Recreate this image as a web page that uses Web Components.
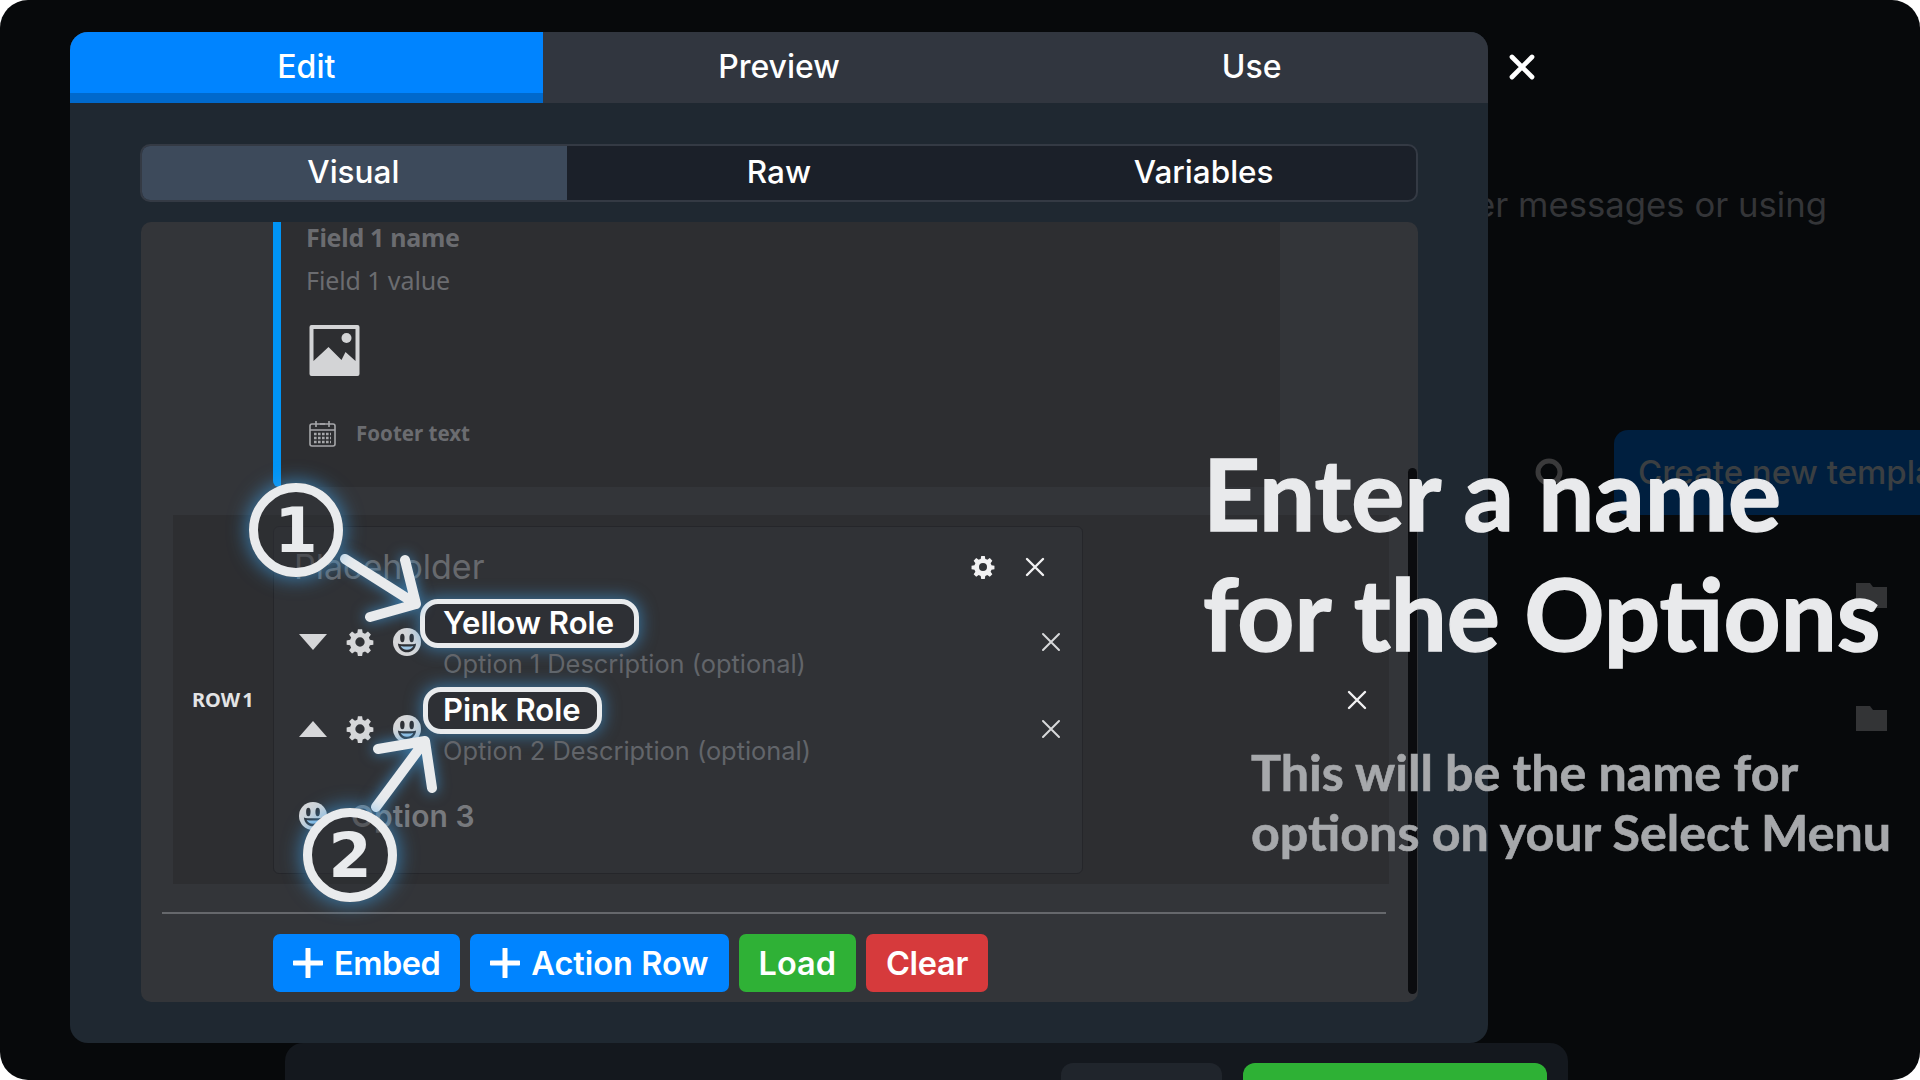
<!DOCTYPE html>
<html lang="en">
<head>
<meta charset="utf-8">
<title>Select menu tutorial</title>
<style>
  html, body { margin: 0; padding: 0; background: #fff; }
  body { width: 1920px; height: 1080px; overflow: hidden; font-family: Inter, "Liberation Sans", sans-serif; }
</style>
</head>
<body>
<tutorial-stage>
  <back-page></back-page>
  <edit-modal>
    <seg-tabs kind="top" items="Edit,Preview,Use" slot="top"></seg-tabs>
    <seg-tabs kind="sub" items="Visual,Raw,Variables" slot="sub"></seg-tabs>
    <embed-preview></embed-preview>
    <action-row>
      <option-item kind="open" name="Yellow Role" desc="Option 1 Description (optional)"></option-item>
      <option-item kind="up" name="Pink Role" desc="Option 2 Description (optional)"></option-item>
      <option-item kind="add" name="Option 3"></option-item>
    </action-row>
    <tool-bar>
      <tool-btn color="#0084ff" spacing="-.5" plus>Embed</tool-btn>
      <tool-btn color="#0084ff" spacing="0" plus>Action Row</tool-btn>
      <tool-btn color="#2fb136" spacing="0">Load</tool-btn>
      <tool-btn color="#d63a3c" spacing="-.3">Clear</tool-btn>
    </tool-bar>
  </edit-modal>
  <close-x></close-x>
  <step-arrows></step-arrows>
  <step-badge n="1" x="296" y="530"></step-badge>
  <step-badge n="2" x="350" y="855"></step-badge>
  <tip-text></tip-text>
</tutorial-stage>

<script>
const CROSS = '<path d="M4 4 20 20M20 4 4 20" fill="none" stroke="currentColor" stroke-linecap="round"/>';
const GEAR = '<path fill="currentColor" fill-rule="evenodd" d="M10.2 1h3.6l.5 3a8 8 0 0 1 2 .85l2.5-1.75 2.55 2.55-1.75 2.5a8 8 0 0 1 .85 2l3 .5v3.6l-3 .5a8 8 0 0 1-.85 2l1.75 2.5-2.55 2.55-2.5-1.75a8 8 0 0 1-2 .85l-.5 3h-3.6l-.5-3a8 8 0 0 1-2-.85l-2.5 1.75-2.55-2.55 1.75-2.5a8 8 0 0 1-.85-2l-3-.5v-3.6l3-.5a8 8 0 0 1 .85-2L2.65 5.65 5.2 3.1l2.5 1.75a8 8 0 0 1 2-.85zM12 8a4 4 0 1 0 0 8 4 4 0 0 0 0-8z"/>';
const SMILE = '<circle cx="12" cy="12" r="12" fill="#d6d7d9"/><ellipse cx="8" cy="8.6" rx="1.9" ry="3.6" fill="#2e3035"/><ellipse cx="16" cy="8.6" rx="1.9" ry="3.6" fill="#2e3035"/><path d="M4.2 13.2c2.4 1.1 13.2 1.1 15.6 0-.4 5-3.8 7.6-7.8 7.6s-7.4-2.6-7.8-7.6z" fill="#2e3035"/><path d="M6.6 15.4c2.6.6 8.2.6 10.8 0-.8 2-2.8 3.2-5.4 3.2s-4.6-1.2-5.4-3.2z" fill="#9fc6e4"/>';

class TutorialStage extends HTMLElement {
  constructor() {
    super();
    this.attachShadow({ mode: "open" });
  }
  connectedCallback() {
    this.shadowRoot.innerHTML = `
    <style>
      :host { display: block; position: relative; width: 1920px; height: 1080px; background: #fff; overflow: hidden; }
    </style>
    <slot></slot>`;
  }
}

class BackPage extends HTMLElement {
  constructor() {
    super();
    this.attachShadow({ mode: "open" });
  }
  connectedCallback() {
    const folder = '<svg width="31" height="25" viewBox="0 0 31 25"><path fill="#333436" d="M0 0h14l3 4h14v21H0z"/></svg>';
    this.shadowRoot.innerHTML = `
    <style>
      :host { display: flex; flex-direction: column; width: 1920px; height: 1080px; box-sizing: border-box; background: #07090b; border-radius: 28px; overflow: hidden; color: #343538; font-family: Inter, sans-serif; }
      #lead { margin: 184px 93px 0 0; height: 40px; line-height: 40px; font-size: 34.7px; text-align: right; white-space: nowrap; }
      #tools { display: flex; align-items: center; justify-content: flex-end; margin-top: 206px; height: 85px; }
      #tools svg { margin-right: 47px; margin-bottom: -2px; }
      #create { flex: none; width: 306px; height: 85px; box-sizing: border-box; padding: 0 0 0 24px; line-height: 85px; font-size: 33px; font-weight: 500; color: #3b3f42; background: #001f3f; border-radius: 14px 0 0 14px; overflow: hidden; white-space: nowrap; }
      #files { display: flex; flex-direction: column; align-items: flex-end; gap: 98px; margin: 68px 33px 0 0; }
      #bar { display: flex; justify-content: flex-end; gap: 21px; margin: auto 0 0 285px; width: 1283px; height: 37px; box-sizing: border-box; padding: 20px 21px 0 0; background: #14181e; border-radius: 18px 18px 0 0; overflow: hidden; }
      #bar i { display: block; height: 40px; border-radius: 12px; }
      #bar i:first-child { width: 161px; background: #20252c; }
      #bar i:last-child { width: 304px; background: #2eb135; }
    </style>
    <div id="lead">other messages or using</div>
    <div id="tools">
      <svg width="34" height="34" viewBox="0 0 34 34"><circle cx="16" cy="15" r="11" fill="none" stroke="#3a3a3b" stroke-width="5"/><path d="M24 23l7 7" stroke="#3a3a3b" stroke-width="5"/></svg>
      <div id="create">Create new template</div>
    </div>
    <div id="files">${folder}${folder}</div>
    <div id="bar"><i></i><i></i></div>`;
  }
}

class EditModal extends HTMLElement {
  constructor() {
    super();
    this.attachShadow({ mode: "open" });
  }
  connectedCallback() {
    this.shadowRoot.innerHTML = `
    <style>
      :host { display: block; position: absolute; left: 70px; top: 32px; width: 1418px; height: 1011px; background: #1f2831; border-radius: 18px; overflow: hidden; }
      #body { padding: 41px 70px 0; }
      #panel { position: relative; margin: 20px 0 0 1px; width: 1277px; height: 780px; background: #333539; border-radius: 10px; overflow: hidden; }
      #scroll { position: absolute; right: 1px; top: 246px; width: 9px; height: 526px; background: #0b0c0f; border-radius: 5px; }
    </style>
    <slot name="top"></slot>
    <div id="body">
      <slot name="sub"></slot>
      <div id="panel"><slot></slot><div id="scroll"></div></div>
    </div>`;
  }
}

class SegTabs extends HTMLElement {
  constructor() {
    super();
    this.attachShadow({ mode: "open" });
  }
  connectedCallback() {
    const items = this.getAttribute("items").split(",");
    const top = this.getAttribute("kind") === "top";
    this.shadowRoot.innerHTML = `
    <style>
      :host { display: grid; grid-template-columns: repeat(3, 1fr); box-sizing: border-box; color: #fff; font: 500 ${top ? 32 : 31.5}px Inter, sans-serif;
        ${top ? "height: 71px; background: #31363f;" : "height: 58px; background: #1b2029; border: 2px solid #343a44; border-radius: 10px; overflow: hidden;"} }
      div { display: flex; align-items: center; justify-content: center; box-sizing: border-box; ${top ? "padding-bottom: 2px;" : "padding-bottom: 3px;"} }
      .on { ${top ? "background: #0084ff; border-bottom: 10px solid #0069cc; padding: 8px 0 0;" : "background: #3d4a5b; margin: -2px 0 -2px -2px;"} }
    </style>
    ${items.map((t, i) => `<div class="${i === 0 ? "on" : ""}">${t}</div>`).join("")}`;
  }
}

class EmbedPreview extends HTMLElement {
  constructor() {
    super();
    this.attachShadow({ mode: "open" });
  }
  connectedCallback() {
    this.shadowRoot.innerHTML = `
    <style>
      :host { display: block; box-sizing: border-box; margin-left: 132px; width: 1007px; height: 265px; padding: 0 0 0 25px; background: #2d2e31; border-left: 8px solid #0094f5; border-radius: 0 0 0 6px; color: #6b6c70; font-family: "Noto Sans", sans-serif; }
      #name { height: 30px; line-height: 30px; font-size: 25px; font-weight: 700; letter-spacing: -.3px; }
      #value { margin-top: 13px; height: 30px; line-height: 30px; font-size: 25px; letter-spacing: -.1px; }
      #image { display: block; margin: 30px 0 0 3px; }
      #foot { display: flex; align-items: center; gap: 20px; margin: 43px 0 0 3px; font-size: 20.5px; font-weight: 700; }
    </style>
    <div id="name">Field 1 name</div>
    <div id="value">Field 1 value</div>
    <svg id="image" width="51" height="51" viewBox="0 0 50 51">
      <path fill="#d3d4d6" fill-rule="evenodd" d="M2 0h46a2 2 0 0 1 2 2v47a2 2 0 0 1-2 2H2a2 2 0 0 1-2-2V2a2 2 0 0 1 2-2zM4 4v32l15-14 13 13 4-8 10 9V4z"/>
      <circle cx="37" cy="13" r="5" fill="#d3d4d6"/>
    </svg>
    <div id="foot">
      <svg width="27" height="27" viewBox="0 0 27 27" fill="none" stroke="#a6a7aa" stroke-width="1.6">
        <rect x="1" y="4" width="25" height="22" rx="2"/><path d="M1 10h25M7 1v6M20 1v6M11 4h5"/>
        <path stroke-width="2.6" stroke-dasharray="2.6 1.4" d="M5 14h17M5 18h17M5 22h17"/>
      </svg>
      <span>Footer text</span>
    </div>`;
  }
}

class ActionRow extends HTMLElement {
  constructor() {
    super();
    this.attachShadow({ mode: "open" });
  }
  connectedCallback() {
    this.shadowRoot.innerHTML = `
    <style>
      :host { display: flex; align-items: center; margin: 28px 0 0 32px; width: 1216px; height: 369px; background: #2d2e31; color: #fff; font-family: Inter, sans-serif; }
      #label { width: 100px; flex: none; padding-left: 19px; box-sizing: border-box; font: 700 20px "Noto Sans", sans-serif; word-spacing: -3px; white-space: nowrap; color: #e3e4e5; }
      #box { flex: none; width: 810px; height: 348px; box-sizing: border-box; background: #303236; border: 1px solid #25262a; border-radius: 6px; }
      #head { display: flex; align-items: center; height: 58px; margin-top: 11px; padding-left: 20px; font-size: 34px; color: #67696d; }
      #head span { flex: 1; }
      #head svg { flex: none; color: #f2f2f3; }
      #head .gear { margin-right: 28px; }
      #head .x { margin-right: 35px; }
      #rowx { flex: none; margin-left: 262px; color: #f2f2f3; }
    </style>
    <div id="label">ROW 1</div>
    <div id="box">
      <div id="head">
        <span>Placeholder</span>
        <svg class="gear" width="24" height="24" viewBox="0 0 24 24">${GEAR}</svg>
        <svg class="x" width="24" height="24" viewBox="0 0 24 24" stroke-width="2.4">${CROSS}</svg>
      </div>
      <slot></slot>
    </div>
    <svg id="rowx" width="24" height="24" viewBox="0 0 24 24" stroke-width="2.4">${CROSS}</svg>`;
  }
}

class OptionItem extends HTMLElement {
  constructor() {
    super();
    this.attachShadow({ mode: "open" });
  }
  connectedCallback() {
    const kind = this.getAttribute("kind");
    const name = this.getAttribute("name");
    const desc = this.getAttribute("desc");
    const styles = `
    <style>
      :host { display: flex; align-items: center; height: 87px; box-sizing: border-box; padding-left: 25px; }
      .ctl { flex: none; color: #d6d7d9; }
      .arrow { width: 28px; margin-right: 19px; }
      .gear { width: 28px; height: 28px; margin-right: 19px; }
      .smile { width: 28px; height: 28px; }
      #text { display: flex; flex-direction: column; align-items: flex-start; margin-left: -1px; width: 625px; }
      #name { box-sizing: border-box; height: 49px; line-height: 38px; padding: 0 20px 0 18px; border: 5px solid #e9ebed; border-radius: 18px; background: #2e3035; font-size: 31px; font-weight: 600; color: #fff; white-space: nowrap; box-shadow: 0 0 16px 2px rgba(64,160,230,.55); }
      #desc { margin-left: 23px; height: 31px; line-height: 31px; font-size: 25.4px; color: #62656a; white-space: nowrap; }
      .x { flex: none; margin: 6px 0 0 -6px; color: #d8d9db; }
      #plain { margin-left: 24px; font-size: 30px; font-weight: 600; color: #77797d; }
      .body { display: flex; align-items: center; padding-top: 5px; }
      :host([kind="add"]) { padding-top: 5px; }
      :host([kind="up"]) #name { margin: 1px 0 1px 3px; padding: 0 16px 0 15px; height: 47px; line-height: 36px; }
    </style>`;
    if (kind === "add") {
      this.shadowRoot.innerHTML = `${styles}
      <svg class="ctl smile" viewBox="0 0 24 24">${SMILE}</svg>
      <span id="plain">${name}</span>`;
      return;
    }
    const arrow = kind === "open" ? '<path fill="currentColor" d="M0 0h28L14 16z"/>' : '<path fill="currentColor" d="M0 16h28L14 0z"/>';
    this.shadowRoot.innerHTML = `${styles}
    <div class="body">
      <svg class="ctl arrow" height="16" viewBox="0 0 28 16">${arrow}</svg>
      <svg class="ctl gear" viewBox="0 0 24 24">${GEAR}</svg>
      <svg class="ctl smile" viewBox="0 0 24 24">${SMILE}</svg>
    </div>
    <div id="text">
      <div id="name">${name}</div>
      <div id="desc">${desc}</div>
    </div>
    <svg class="x" width="24" height="24" viewBox="0 0 24 24" stroke-width="2">${CROSS}</svg>`;
  }
}

class ToolBar extends HTMLElement {
  constructor() {
    super();
    this.attachShadow({ mode: "open" });
  }
  connectedCallback() {
    this.shadowRoot.innerHTML = `
    <style>
      :host { display: flex; gap: 10px; box-sizing: border-box; margin: 28px 0 0 21px; width: 1224px; padding: 20px 0 0 111px; border-top: 2px solid #66686c; }
    </style>
    <slot></slot>`;
  }
}

class ToolBtn extends HTMLElement {
  constructor() {
    super();
    this.attachShadow({ mode: "open" });
  }
  connectedCallback() {
    const plus = this.hasAttribute("plus");
    this.shadowRoot.innerHTML = `
    <style>
      :host { display: flex; align-items: center; gap: 11px; height: 58px; box-sizing: border-box; padding: 0 20px; border-radius: 7px; color: #fff; font: 600 32.5px Inter, sans-serif; letter-spacing: ${this.getAttribute("spacing")}px; background: ${this.getAttribute("color")}; }
    </style>
    ${plus ? '<svg width="30" height="30" viewBox="0 0 30 30"><path d="M15 1v28M1 15h28" stroke="#fff" stroke-width="5" stroke-linecap="round"/></svg>' : ""}
    <slot></slot>`;
  }
}

class CloseX extends HTMLElement {
  constructor() {
    super();
    this.attachShadow({ mode: "open" });
  }
  connectedCallback() {
    this.shadowRoot.innerHTML = `
    <style>
      :host { display: block; position: absolute; left: 1507px; top: 52px; width: 30px; height: 30px; color: #fff; }
      svg { display: block; }
    </style>
    <svg width="30" height="30" viewBox="0 0 24 24" stroke-width="3.8">${CROSS}</svg>`;
  }
}

class StepArrows extends HTMLElement {
  constructor() {
    super();
    this.attachShadow({ mode: "open" });
  }
  connectedCallback() {
    this.shadowRoot.innerHTML = `
    <style>
      :host { display: block; position: absolute; left: 0; top: 0; width: 1920px; height: 1080px; pointer-events: none; }
      svg { display: block; filter: drop-shadow(0 0 7px rgba(64,160,230,.75)); }
    </style>
    <svg width="1920" height="1080" viewBox="0 0 1920 1080" fill="none" stroke="#e9ebed" stroke-width="10" stroke-linecap="round" stroke-linejoin="round">
      <path d="M345 559 416 604M405 560 416 604 370 617"/>
      <path d="M376 807 425 741M378 749 425 741 432 788"/>
    </svg>`;
  }
}

class StepBadge extends HTMLElement {
  constructor() {
    super();
    this.attachShadow({ mode: "open" });
  }
  connectedCallback() {
    this.shadowRoot.innerHTML = `
    <style>
      :host { display: flex; align-items: center; justify-content: center; position: absolute; left: ${this.getAttribute("x") - 47}px; top: ${this.getAttribute("y") - 47}px; width: 94px; height: 94px; box-sizing: border-box; border: 9px solid #e9ebed; border-radius: 50%; background: rgba(46,48,53,.45); color: #e9ebed; font: 700 62px "DejaVu Sans", sans-serif; box-shadow: 0 0 18px 3px rgba(64,160,230,.6); }
    </style>
    ${this.getAttribute("n")}`;
  }
}

class TipText extends HTMLElement {
  constructor() {
    super();
    this.attachShadow({ mode: "open" });
  }
  connectedCallback() {
    this.shadowRoot.innerHTML = `
    <style>
      :host { display: block; position: absolute; left: 1203px; top: 433px; width: 710px; font-family: Lato, sans-serif; font-feature-settings: "liga"; }
      h1 { margin: 0; font-size: 99.5px; line-height: 120px; font-weight: 700; color: #e9eaec; white-space: nowrap; -webkit-text-stroke: 1.4px #e9eaec; }
      p { margin: 69px 0 0 48px; font-size: 50.2px; line-height: 60px; font-weight: 700; color: #a6a8ab; white-space: nowrap; -webkit-text-stroke: .6px #a6a8ab; }
    </style>
    <h1>Enter a name<br>for the Options</h1>
    <p>This will be the name for<br>options on your Select Menu</p>`;
  }
}

customElements.define("tutorial-stage", TutorialStage);
customElements.define("back-page", BackPage);
customElements.define("edit-modal", EditModal);
customElements.define("seg-tabs", SegTabs);
customElements.define("embed-preview", EmbedPreview);
customElements.define("action-row", ActionRow);
customElements.define("option-item", OptionItem);
customElements.define("tool-bar", ToolBar);
customElements.define("tool-btn", ToolBtn);
customElements.define("close-x", CloseX);
customElements.define("step-arrows", StepArrows);
customElements.define("step-badge", StepBadge);
customElements.define("tip-text", TipText);
</script>
</body>
</html>
